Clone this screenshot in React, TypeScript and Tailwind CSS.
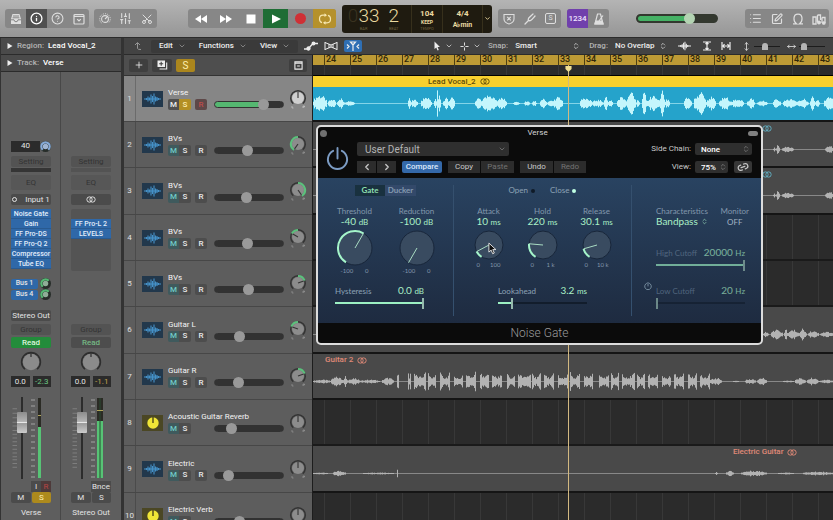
import React, { useState } from 'react';
import {
  ChevronDown,
  ChevronLeft,
  ChevronRight,
  ChevronsUpDown,
  CircleHelp,
  Info,
  Link2,
  List,
  MoveHorizontal,
  MoveVertical,
  Plus,
  Scissors,
  SlidersVertical,
  SquarePen,
} from 'lucide-react';
import clsx from 'clsx';

const polar = (c: number, r: number, deg: number) => {
  const a = ((deg - 90) * Math.PI) / 180;
  return [c + r * Math.cos(a), c + r * Math.sin(a)];
};

const arc = (c: number, r: number, from: number, to: number) => {
  const [x1, y1] = polar(c, r, from);
  const [x2, y2] = polar(c, r, to);
  return `M${x1} ${y1}A${r} ${r} 0 ${to - from > 180 ? 1 : 0} 1 ${x2} ${y2}`;
};

// [start, end, amplitude] in timeline pixels
type Burst = [number, number, number];

const noise = (n: number) => {
  const v = Math.sin(n * 12.9898) * 43758.5453;
  return v - Math.floor(v);
};

// plucked bursts are loud at both ends, sung ones swell in the middle
const envelope = (t: number, plucked: boolean) => {
  const edge = Math.abs(t * 2 - 1);
  return plucked ? 0.5 + 0.5 * edge * edge : 1 - 0.6 * edge * edge;
};

const Wave = ({ bursts, className, height = 31 }: { bursts: Burst[]; className: string; height?: number }) => {
  const mid = Math.floor(height / 2) + 0.5;
  const plucked = (amp: number) => height === 31 && amp > 6;
  let d = '';
  bursts.forEach(([from, to, amp]) => {
    for (let x = from; x <= to; x++) {
      const t = to > from ? (x - from) / (to - from) : 0.5;
      const h = Math.max(0.5, amp * envelope(t, plucked(amp)) * (0.5 + 0.5 * noise(x + from)));
      d += `M${x + 0.5} ${mid - h}V${mid + h}`;
    }
  });
  return (
    <svg viewBox={`0 0 520 ${height}`} preserveAspectRatio="none" style={{ height }} className={clsx('w-full shrink-0', className)}>
      <path d={`M0 ${mid}H520`} stroke="currentColor" strokeWidth="1" opacity="0.6" />
      <path d={d} stroke="currentColor" strokeWidth="1" fill="none" />
    </svg>
  );
};

const LinkRings = ({ className = '' }: { className?: string }) => (
  <svg viewBox="0 0 12 8" className={clsx('h-[7px] w-[10px]', className)} fill="none" stroke="currentColor" strokeWidth="1.1">
    <circle cx="4.2" cy="4" r="3.2" />
    <circle cx="7.8" cy="4" r="3.2" />
  </svg>
);

/* ---------- toolbar ---------- */

const ToolButton = ({ label, className, children }: { label: string; className?: string; children: React.ReactNode }) => (
  <button aria-label={label} className={clsx('flex h-[19px] w-[21px] items-center justify-center', className)}>
    {children}
  </button>
);

const group = 'flex overflow-hidden rounded-[3px] bg-[#878787] text-[#dedede]';

const Toolbar = () => (
  <header className="flex h-[37px] shrink-0 items-center justify-between bg-linear-to-b from-[#b4b4b4] to-[#969696] pr-1 pl-[5px]">
    <div className="flex gap-[5px]">
      <div className={group}>
        <ToolButton label="Library">
          <svg viewBox="0 0 12 12" className="size-[12px]">
            <path d="M2.5 1H9.500L11 6V11H1V6Z" fill="#dedede" />
            <path d="M3 3H9M2.600 4.800H9.400M1 6.800H4Q4.300 8.800 6 8.800T8 6.800H11" stroke="#7c7c7c" strokeWidth="0.900" fill="none" />
          </svg>
        </ToolButton>
        <ToolButton label="Inspector" className="bg-[#505050] text-white"><Info size={13} strokeWidth={2.4} /></ToolButton>
        <ToolButton label="Quick Help"><CircleHelp size={13} /></ToolButton>
        <ToolButton label="Toolbar">
          <svg viewBox="0 0 12 12" className="size-[12px]" fill="none" stroke="currentColor" strokeWidth="1.2">
            <rect x="1" y="1.5" width="10" height="9.5" rx="1" />
            <path d="M1 3.4H11M4.2 6.2L6 8L7.8 6.2" />
          </svg>
        </ToolButton>
      </div>
      <div className={group}>
        <ToolButton label="Smart Controls">
          <svg viewBox="0 0 12 12" className="size-[12px]" fill="none" stroke="currentColor">
            <circle cx="6" cy="6" r="3.4" strokeWidth="1.1" />
            <path d="M6 6L8 4" strokeWidth="1.1" />
            <path d={arc(6, 5.3, -140, 140)} strokeWidth="1" strokeDasharray="1 1.1" />
          </svg>
        </ToolButton>
        <ToolButton label="Mixer"><SlidersVertical size={13} /></ToolButton>
        <ToolButton label="Editors"><Scissors size={12} className="-rotate-90" /></ToolButton>
      </div>
    </div>

    <div className="flex items-center gap-[6px] pl-1">
      <div className="flex overflow-hidden rounded-[3px] bg-[#878787] text-white">
        {[
          { label: 'Rewind', d: 'M7 2V10L1 6ZM13 2V10L7 6Z' },
          { label: 'Forward', d: 'M1 2V10L7 6ZM7 2V10L13 6Z' },
          { label: 'Stop', d: 'M2.500 1.500H11.500V10.500H2.500Z' },
        ].map((b) => (
          <button key={b.label} aria-label={b.label} className="flex h-[19px] w-[25px] items-center justify-center">
            <svg viewBox="0 0 14 12" className="h-[12px] w-[14px]" fill="currentColor"><path d={b.d} /></svg>
          </button>
        ))}
        <button aria-label="Play" className="flex h-[19px] w-[25px] items-center justify-center bg-[#1f6d35]">
          <svg viewBox="0 0 12 12" className="size-[12px]" fill="currentColor"><path d="M2 1.500L11 6L2 10.500Z" /></svg>
        </button>
        <button aria-label="Record" className="flex h-[19px] w-[25px] items-center justify-center">
          <span className="size-[11px] rounded-full bg-[#cf3035]" />
        </button>
        <button aria-label="Cycle" className="flex h-[19px] w-[23px] items-center justify-center bg-[#b5912c] text-[#f6e6ae]">
          <svg viewBox="0 0 14 12" className="h-[12px] w-[14px]" fill="none" stroke="currentColor" strokeWidth="1.2">
            <path d="M8 2.200H5Q1.500 2.200 1.500 6Q1.500 9 4 9.700M6 9.800H9Q12.500 9.800 12.500 6Q12.500 3 10 2.300" />
            <path d="M6.500 0.300L9 2.200L6.500 4.100ZM7.500 7.900L5 9.800L7.500 11.700Z" fill="currentColor" stroke="none" />
          </svg>
        </button>
      </div>

      <div className="flex h-[28px] w-[150px] rounded-[3px] bg-[#1f1b10] text-[#ead9a0]">
        <div className="flex w-[70px] items-start justify-end gap-[9px] border-r border-[#37301c] pr-3 leading-none">
          <div className="flex flex-col items-center">
            <span className="text-[19px] leading-[22px] font-light"><span className="text-[#3a3320]">0</span>33</span>
            <span className="text-[4px] leading-[4px] text-[#6b5f3c]">BAR</span>
          </div>
          <div className="flex flex-col items-center">
            <span className="text-[19px] leading-[22px] font-light">2</span>
            <span className="text-[4px] leading-[4px] text-[#6b5f3c]">BEAT</span>
          </div>
        </div>
        <div className="flex w-[31px] flex-col items-center border-r border-[#37301c] pt-1 font-bold">
          <span className="text-[8px] leading-[9px]">104</span>
          <span className="text-[5px] leading-[8px]">KEEP</span>
          <span className="text-[4px] leading-[6px] font-normal text-[#6b5f3c]">TEMPO</span>
        </div>
        <div className="flex w-[40px] flex-col items-center border-r border-[#37301c] pt-1 font-bold">
          <span className="text-[8px] leading-[9px]">4/4</span>
          <span className="text-[7px] leading-[14px]">A♭min</span>
        </div>
        <button aria-label="Display mode" className="flex flex-1 items-center justify-center"><ChevronDown size={7} strokeWidth={3} /></button>
      </div>

      <div className={group}>
        <ToolButton label="Replace">
          <svg viewBox="0 0 12 12" className="size-[12px]" fill="none" stroke="currentColor" strokeWidth="1.1">
            <path d="M1 1.500H11V6Q11 9.500 6 11Q1 9.500 1 6ZM4.200 3.800L7.800 7.400M7.800 3.800L4.200 7.400" />
          </svg>
        </ToolButton>
        <ToolButton label="Tuner">
          <svg viewBox="0 0 12 12" className="size-[12px]" fill="none" stroke="currentColor" strokeWidth="1.300" strokeLinecap="round">
            <path d="M1 11L4.500 7.500M4.500 7.500C3.500 5.500 5 4.500 9 1M4.500 7.500C6.500 8.500 7.500 7 11 3" />
          </svg>
        </ToolButton>
        <ToolButton label="Solo">
          <span className="flex size-[11px] items-center justify-center rounded-[2px] border border-[#dedede] text-[7px]">S</span>
        </ToolButton>
      </div>

      <div className={group}>
        <button className="h-[19px] w-[21px] bg-[#7040ac] text-[8px] font-medium text-[#f0e6ff]">1234</button>
        <ToolButton label="Metronome">
          <svg viewBox="0 0 12 12" className="size-[12px]" fill="none" stroke="currentColor" strokeWidth="1.200">
            <path d="M4.500 1H7.500L10 11H2ZM6 8L10 2.500" />
            <path d="M2.800 8H9.200L10 11H2Z" fill="currentColor" />
          </svg>
        </ToolButton>
      </div>
    </div>

    <input
      type="range"
      aria-label="Master volume"
      defaultValue={69}
      className="h-[11px] w-[82px] appearance-none bg-transparent [&::-webkit-slider-runnable-track]:h-[9px] [&::-webkit-slider-runnable-track]:rounded-full [&::-webkit-slider-runnable-track]:border-2 [&::-webkit-slider-runnable-track]:border-[#33382f] [&::-webkit-slider-runnable-track]:bg-[linear-gradient(to_right,#45b265_70%,#33382f_70%)] [&::-webkit-slider-thumb]:-mt-[3px] [&::-webkit-slider-thumb]:size-[11px] [&::-webkit-slider-thumb]:appearance-none [&::-webkit-slider-thumb]:rounded-full [&::-webkit-slider-thumb]:bg-[#b3d3b2]"
    />

    <div className={group}>
      <ToolButton label="List Editors"><List size={13} /></ToolButton>
      <ToolButton label="Note Pads"><SquarePen size={12} strokeWidth={2.4} /></ToolButton>
      <ToolButton label="Loop Browser">
        <svg viewBox="0 0 12 12" className="size-[12px]" fill="none" stroke="currentColor" strokeWidth="1.200">
          <path d="M1 10.800H4.500C1 8.500 0.800 1.200 6 1.200S11 8.500 7.500 10.800H11" />
        </svg>
      </ToolButton>
      <ToolButton label="Browsers">
        <svg viewBox="0 0 14 12" className="h-[12px] w-[14px]" fill="none" stroke="currentColor" strokeWidth="1.300">
          <path d="M1 4H4V11H1ZM5.500 2H8.500V7M5.500 2V9M10 4.500H13V10M10 4.500V10" />
          <circle cx="7" cy="9.500" r="1.300" fill="currentColor" />
          <circle cx="11.800" cy="10" r="1.200" fill="currentColor" />
        </svg>
      </ToolButton>
    </div>
  </header>
);

/* ---------- inspector ---------- */

const PanKnob = ({ green }: { green?: boolean }) => (
  <svg viewBox="0 0 12 12" className="size-[11px]">
    <circle cx="6" cy="6" r="6" fill="#272d29" />
    <path d={arc(6, 4.6, -140, green ? 50 : 140)} stroke={green ? '#55b873' : '#87abd8'} strokeWidth="2.4" fill="none" />
    <circle cx="6" cy="6" r="3" fill={green ? '#8fae97' : '#9fb5d3'} />
  </svg>
);

const Fader = ({ name, level, peak, wide }: { name: string; level: number; peak: number; wide?: boolean }) => (
  <div className="mt-[10px] flex h-[82px] w-full items-stretch justify-between pr-2">
    <div className="flex items-stretch">
      <svg viewBox="0 0 8 82" className="h-[82px] w-[6px]" stroke="#8a8a8a" strokeWidth="1">
        {[2, 8, 14, 20, 25, 31, 36, 41, 46, 51, 56, 61, 66, 70, 75, 80].map((y) => <path key={y} d={`M2 ${y}H8`} />)}
      </svg>
      <input
        type="range"
        aria-label={`${name} fader`}
        defaultValue={76}
        className="h-[82px] w-[10px] appearance-none bg-transparent bg-[linear-gradient(to_right,transparent_4px,#2c2c2c_4px,#2c2c2c_6px,transparent_6px)] [direction:rtl] [writing-mode:vertical-lr] [&::-webkit-slider-thumb]:h-[21px] [&::-webkit-slider-thumb]:w-[10px] [&::-webkit-slider-thumb]:appearance-none [&::-webkit-slider-thumb]:rounded-[1px] [&::-webkit-slider-thumb]:bg-[linear-gradient(#8c8c8c,#b3b3b3_45%,#e8e8e8_50%,#9a9a9a_55%,#cdcdcd)]"
      />
    </div>
    <svg viewBox="0 0 14 82" className="h-[82px] w-[14px]">
      <path d="M2 3H6M2 9H6M2 15H6M2 21H6M2 27H6M2 33H6M2 39H6M2 45H6M2 51H6M2 57H6M2 63H6M2 69H6M2 75H6M2 80H6" stroke="#808080" strokeWidth="2" />
      <rect x={wide ? 8 : 9} y="1" width={wide ? 6 : 3} height="80" fill="#2b2b25" />
      <rect x={wide ? 8 : 9} y={level} width={wide ? 6 : 3} height={81 - level} fill="#57c375" />
      {wide && <path d="M11 1V81" stroke="#2b4a33" strokeWidth="1" />}
      <rect x={wide ? 8 : 9} y={peak} width={wide ? 6 : 3} height="1" fill="#b0a45a" />
    </svg>
  </div>
);

interface StripProps {
  name: string;
  inserts: string[];
  value: string;
  output?: boolean;
}

const cell = 'flex h-[11px] w-full shrink-0 items-center justify-center rounded-[2px] text-[8px]';

const ChannelStrip = ({ name, inserts, value, output }: StripProps) => (
  <div className={clsx('flex flex-1 flex-col items-center px-[10px] pt-[68px] text-[#e4e4e4]', output && 'shadow-[-1px_0_0_#484848]')}>
    <div className="flex h-[12px] w-full items-center">
      {!output && (
        <>
          <span className="flex h-[11px] flex-1 items-center justify-center bg-[#2b2b2b] text-[8px]">40</span>
          <PanKnob />
        </>
      )}
    </div>
    <button className={clsx(cell, 'mt-1 bg-[#535353] text-[#343434]')}>Setting</button>
    <div className={clsx('mt-px h-1 w-full shrink-0', output ? 'bg-[#535353]' : 'bg-[#353535]')} />
    <button className="mt-[3px] flex h-[15px] w-full shrink-0 items-center justify-center rounded-[2px] bg-[#575757] text-[8px] text-[#343434]">EQ</button>
    <button aria-label={output ? 'Stereo' : undefined} className={clsx(cell, 'mt-1 gap-2 whitespace-nowrap bg-[#4b4b4b]')}>
      {output ? <LinkRings /> : (
        <>
          <span className="size-[5px] rounded-full border border-[#e4e4e4]" />
          Input 1
        </>
      )}
    </button>
    <div className={clsx('mt-1 flex h-[62px] w-full shrink-0 flex-col rounded-[2px] text-[7px] leading-[10px] font-medium whitespace-nowrap', output && 'bg-[#545454] pt-[10px]')}>
      {inserts.map((fx) => (
        <button key={fx} className="flex h-[10px] shrink-0 items-center justify-center border-b border-[#295a90] bg-[#2f68a8] text-[#e3eefb]">{fx}</button>
      ))}
    </div>
    <div className="mt-[7px] flex h-[22px] w-full shrink-0 flex-col">
      {!output && ['Bus 1', 'Bus 4'].map((bus) => (
        <div key={bus} className="flex h-[11px] items-center gap-[2px]">
          <button className="flex h-[10px] flex-1 items-center justify-center rounded-[2px] bg-[#2f68a8] text-[7px] font-medium">{bus}</button>
          <PanKnob green />
        </div>
      ))}
    </div>
    <button disabled={output} className={clsx(cell, 'mt-[10px] whitespace-nowrap', output ? 'invisible' : 'bg-[#4b4b4b]')}>Stereo Out</button>
    <button className={clsx(cell, 'mt-[3px] bg-[#535353] text-[#343434]')}>Group</button>
    <button className={clsx(cell, 'mt-[2px] font-medium', output ? 'bg-[#4d4d4d] text-[#74b884]' : 'bg-[#238c3b] text-[#dcf5dc]')}>Read</button>
    <svg viewBox="0 0 22 22" className="mt-[3px] size-[22px] shrink-0">
      <path d={arc(11, 9.4, -140, 140)} stroke="#2e2e2e" strokeWidth="1.600" fill="none" />
      <circle cx="11" cy="11" r="8.200" fill="#8b8b8b" />
      <path d="M11 1V6" stroke="#2e2e2e" strokeWidth="1.200" />
    </svg>
    <div className="mt-[3px] flex h-[11px] w-full shrink-0 gap-[3px] text-[8px]">
      <span className="flex flex-1 items-center justify-center bg-[#2b2b2b]">0.0</span>
      <span className={clsx('flex flex-1 items-center justify-center bg-[#2b2b2b]', output ? 'text-[#c3a44e]' : 'text-[#6bc582]')}>{value}</span>
    </div>
    <Fader name={name} level={output ? 24 : 30} peak={output ? 13 : 18} wide={output} />
    <div className="mt-[2px] flex h-[11px] w-full shrink-0 justify-end text-[8px]">
      {output ? (
        <button className="flex w-[20px] items-center justify-center bg-[#4b4b4b]">Bnce</button>
      ) : (
        <>
          <button className="flex w-[10px] items-center justify-center bg-[#4b4b4b]">I</button>
          <button className="flex w-[10px] items-center justify-center bg-[#4e3a3a] text-[#b84545]">R</button>
        </>
      )}
    </div>
    <div className="flex h-[11px] w-full shrink-0 gap-px text-[8px]">
      <button className="flex flex-1 items-center justify-center rounded-[2px] bg-[#4b4b4b]">M</button>
      <button className={clsx('flex flex-1 items-center justify-center rounded-[2px]', output ? 'bg-[#4b4b4b]' : 'bg-[#ad8a1d] text-[#fff0b3]')}>S</button>
    </div>
    <span className="mt-1 text-[8px] leading-[11px] whitespace-nowrap">{name}</span>
  </div>
);

const Inspector = () => (
  <aside className="flex w-[124px] shrink-0 flex-col border-r-3 border-l border-[#333] bg-[#5e5e5e] text-[9px] text-white">
    {[['Region:', 'Lead Vocal_2'], ['Track:', 'Verse']].map(([label, value]) => (
      <button key={label} className="flex h-[17px] shrink-0 items-center gap-1 border-b border-[#2b2b2b] bg-[#4a4a4a] pl-1.5 text-[8px] font-medium">
        <svg viewBox="0 0 6 6" className="size-[6px]"><path d="M0.500 0L5.500 3L0.500 6Z" fill="#eee" /></svg>
        <span className="text-[#b5b5b5]">{label}</span>
        <span>{value}</span>
      </button>
    ))}
    <div className="flex flex-1">
      <ChannelStrip name="Verse" value="-2.3" inserts={['Noise Gate', 'Gain', 'FF Pro-DS', 'FF Pro-Q 2', 'Compressor', 'Tube EQ']} />
      <ChannelStrip name="Stereo Out" value="-1.1" inserts={['FF Pro-L 2', 'LEVELS']} output />
    </div>
  </aside>
);

/* ---------- tracks ---------- */

interface Track {
  name: string;
  volume: number;
  pan: number;
  aux?: boolean;
}

const tracks: Track[] = [
  { name: 'Verse', volume: 75, pan: 0 },
  { name: 'BVs', volume: 47, pan: -145 },
  { name: 'BVs', volume: 46, pan: 145 },
  { name: 'BVs', volume: 48, pan: -60 },
  { name: 'BVs', volume: 49, pan: 70 },
  { name: 'Guitar L', volume: 33, pan: -70 },
  { name: 'Guitar R', volume: 32, pan: 70 },
  { name: 'Acoustic Guitar Reverb', volume: 19, pan: 0, aux: true },
  { name: 'Electric', volume: 14, pan: 0 },
  { name: 'Electric Verb', volume: 33, pan: 0, aux: true },
];

const TrackIcon = ({ aux }: { aux?: boolean }) =>
  aux ? (
    <span className="flex h-[16px] w-[21px] shrink-0 items-center justify-center bg-[#4b4724]">
      <svg viewBox="0 0 12 12" className="size-[12px]"><circle cx="6" cy="6" r="5.700" fill="#f0e637" /><path d="M6 0V6" stroke="#3f3b18" strokeWidth="1.300" /></svg>
    </span>
  ) : (
    <span className="flex h-[16px] w-[21px] shrink-0 items-center justify-center bg-[#22384c]">
      <svg viewBox="0 0 17 12" className="h-[12px] w-[17px]" stroke="#4591c8" strokeWidth="1.100">
        <path d="M1 5.500V6.500M2.500 5V7M4 3.500V8.500M5.500 4.500V7.500M7 1.500V10.500M8.500 3V9M10 0.500V11.500M11.500 3.500V8.500M13 4V8M14.500 5V7M16 5.500V6.500M0 6H17" />
      </svg>
    </span>
  );

const TrackHeader = ({ track, index }: { track: Track; index: number }) => {
  const [volume, setVolume] = useState(track.volume);
  const selected = index === 0;
  const fill = `${Math.round(volume * 0.9 + 6)}%`;
  const on = 'flex h-[11px] items-center justify-center text-[8px] font-medium';

  return (
    <li className={clsx('flex items-center border-b border-[#474747]', selected ? 'bg-[#868686]' : 'bg-[#5d5d5d]')}>
      <span className={clsx('flex w-[12px] items-center justify-center self-stretch border-r text-[8px] text-[#e0e0e0]', selected ? 'border-[#6b6b6b]' : 'border-[#4b4b4b]')}>
        {index + 1}
      </span>
      <span className="pr-[5px] pl-[6px]"><TrackIcon aux={track.aux} /></span>
      <div className="flex flex-1 flex-col gap-px">
        <span className="text-[8px] leading-[11px] whitespace-nowrap text-[#f4f4f4]">{track.name}</span>
        <div className="flex h-[11px] items-center text-[#ececec]">
          <button className={clsx(on, 'w-[11px] rounded-l-[2px]', selected ? 'bg-[#505050]' : 'bg-[#3f5a5d] text-[#6fcac6]')}>M</button>
          <button className={clsx(on, 'w-[12px] rounded-r-[2px]', selected ? 'bg-[#b38f24] text-[#ffedb0]' : 'bg-[#4d4d4d]')}>S</button>
          {!track.aux && (
            <button className={clsx(on, 'ml-1 w-[12px] rounded-[2px]', selected ? 'bg-[#5e4848] text-[#bd4c4c]' : 'bg-[#4d4d4d]')}>R</button>
          )}
          <input
            type="range"
            aria-label={`${track.name} ${index + 1} volume`}
            value={volume}
            onChange={(e) => setVolume(Number(e.target.value))}
            style={{ '--fill': selected ? fill : '0%' } as React.CSSProperties}
            className="ml-auto h-[11px] w-[70px] appearance-none bg-transparent [&::-webkit-slider-runnable-track]:h-[7px] [&::-webkit-slider-runnable-track]:rounded-full [&::-webkit-slider-runnable-track]:border [&::-webkit-slider-runnable-track]:border-[#323232] [&::-webkit-slider-runnable-track]:bg-[linear-gradient(to_right,#55b771_var(--fill),#323232_var(--fill))] [&::-webkit-slider-thumb]:-mt-[3px] [&::-webkit-slider-thumb]:size-[11px] [&::-webkit-slider-thumb]:appearance-none [&::-webkit-slider-thumb]:rounded-full [&::-webkit-slider-thumb]:bg-[#999]"
          />
        </div>
      </div>
      <svg viewBox="0 0 18 20" className="mr-[5px] ml-[5px] h-[20px] w-[18px] shrink-0">
        <path d={arc(9, 7.3, -140, 140)} stroke="#343434" strokeWidth="1.500" fill="none" />
        {track.pan !== 0 && (
          <path d={track.pan < 0 ? arc(9, 6.9, track.pan, 0) : arc(9, 6.9, 0, track.pan)} stroke="#5cc07c" strokeWidth="2.400" fill="none" />
        )}
        <circle cx="9" cy="9" r="6" fill={selected ? '#cfcfcf' : '#8c8c8c'} />
        <path d={`M9 9L${polar(9, 6, track.pan).join(' ')}`} stroke="#333" strokeWidth="1.100" />
        <path d="M3 17V19H4.500M14 19V17H15.500V18H14" stroke={selected ? '#ccc' : '#999'} strokeWidth="0.700" fill="none" />
      </svg>
    </li>
  );
};

const vocal: Burst[] = [
  [0, 13, 9], [15, 22, 5], [24, 30, 6], [31, 41, 3], [95, 97, 9], [98, 104, 5], [108, 118, 7], [121, 123, 8], [124, 124, 17], [125, 127, 12],
  [130, 135, 6], [136, 141, 8], [162, 168, 6], [169, 183, 9], [184, 193, 6], [200, 206, 2], [211, 216, 3], [219, 223, 3], [227, 233, 6],
  [234, 241, 3], [240, 249, 7], [267, 278, 7], [279, 290, 4], [291, 294, 11], [295, 299, 4], [304, 313, 7], [314, 322, 11], [323, 326, 4],
  [329, 333, 12], [334, 346, 8], [347, 351, 13], [352, 356, 5], [371, 378, 7], [381, 392, 12], [393, 402, 7], [406, 417, 7], [418, 430, 5],
  [434, 441, 6], [444, 454, 3], [460, 467, 5], [470, 483, 5], [484, 495, 5], [497, 501, 9], [502, 506, 5], [511, 520, 8],
];
const backing: Burst[] = [[460, 462, 2], [463, 466, 5], [469, 480, 3], [512, 520, 4]];
const guitarL: Burst[] = [[450, 455, 3], [458, 469, 5], [471, 474, 6], [475, 485, 5], [486, 493, 6], [495, 505, 4], [507, 520, 3]];
const guitarR: Burst[] = [
  [0, 17, 2], [18, 29, 5], [30, 34, 6], [35, 46, 4], [47, 66, 2], [69, 80, 4], [84, 85, 8], [95, 97, 10], [101, 112, 10], [115, 122, 9],
  [127, 136, 9], [141, 149, 7], [153, 162, 10], [167, 175, 10], [179, 188, 10], [194, 201, 9], [205, 217, 10], [219, 227, 9],
  [231, 240, 9], [245, 254, 7], [257, 266, 10], [271, 279, 10], [286, 295, 9], [298, 305, 9], [309, 321, 10], [324, 331, 9],
  [335, 344, 9], [349, 357, 7], [361, 370, 10], [375, 383, 10], [387, 396, 10], [397, 408, 4], [420, 425, 1], [432, 442, 3],
  [444, 453, 4], [470, 480, 1], [482, 492, 4], [494, 505, 4], [506, 520, 2],
];
const electric: Burst[] = [[0, 14, 1], [20, 32, 3], [50, 80, 1], [84, 84, 5], [402, 404, 2], [413, 420, 3], [428, 453, 3], [465, 480, 1], [490, 520, 2]];

const gridLines = 'bg-[repeating-linear-gradient(to_right,#2b2b2b_0,#2b2b2b_11px,#383838_11px,#383838_12px,#2b2b2b_12px,#2b2b2b_26px)]';

const Region = ({ bursts, label, className }: { bursts: Burst[]; label?: string; className?: string }) => (
  <li className="flex flex-col overflow-hidden border-b-2 border-[#151515] bg-[#494949]">
    <span className={clsx('flex h-[12px] shrink-0 items-center gap-1 text-[8px] font-medium', className)}>
      {label}
      {className && <LinkRings />}
    </span>
    <Wave bursts={bursts} className="text-[#b2b2b2]" />
  </li>
);

const EmptyLane = () => <li className={clsx('border-b-2 border-[#1a1a1a]', gridLines)} />;

const rows = 'grid auto-rows-[46px_46px_47px]';

/* ---------- plug-in window ---------- */

interface DialProps {
  label: string;
  value: string;
  unit: string;
  angle: number;
  min: string;
  max: string;
  large?: boolean;
  filled?: boolean;
}

const Dial = ({ label, value, unit, angle, min, max, large, filled = true }: DialProps) => {
  const size = large ? 38 : 32;
  const c = size / 2;
  const r = c - 2;
  return (
    <div className={clsx('flex flex-col items-center', large ? 'w-[62px]' : 'w-[54px]')}>
      <span className="text-[8px] leading-[10px] text-[#8297ac]">{label}</span>
      <span className="text-[10px] leading-[11px] whitespace-nowrap text-[#a9efc6]">{value} <span className="text-[8px]">{unit}</span></span>
      <svg role="img" aria-label={`${label} dial`} viewBox={`0 0 ${size} ${size}`} className="mt-px" width={size} height={size}>
        <circle cx={c} cy={c} r={r} fill="#394b60" stroke="#18263a" strokeWidth="1" />
        {filled && <path d={arc(c, r, -148, angle)} stroke="#a5f5ca" strokeWidth="2" fill="none" />}
        <path d={`M${c} ${c}L${polar(c, r, angle).join(' ')}`} stroke="#a9dcc3" strokeWidth="1" />
      </svg>
      <span className={clsx('flex justify-between text-[6px] leading-[8px] text-[#8297ac]', large ? 'w-[28px]' : 'w-[24px]')}>
        <span>{min}</span>
        <span>{max}</span>
      </span>
    </div>
  );
};

interface ParamProps {
  id: string;
  label: string;
  value: string;
  unit: string;
  percent: number;
  dim?: boolean;
}

const Param = ({ id, label, value, unit, percent, dim }: ParamProps) => (
  <div className={clsx('flex w-[89px] flex-col', dim && 'opacity-65')}>
    <div className="flex items-center justify-between leading-[11px] whitespace-nowrap">
      <label htmlFor={id} className={clsx('text-[8px]', dim ? 'text-[#6a809a]' : 'text-[#8da2b5]')}>{label}</label>
      <span className="text-[10px] text-[#a9efc6]">{value} <span className="text-[8px]">{unit}</span></span>
    </div>
    <input
      id={id}
      type="range"
      defaultValue={percent}
      style={{ '--fill': `${percent}%` } as React.CSSProperties}
      className="h-[11px] w-full appearance-none bg-transparent [&::-webkit-slider-runnable-track]:h-[2px] [&::-webkit-slider-runnable-track]:bg-[linear-gradient(to_right,#9cf0c3_var(--fill),#121d2c_var(--fill))] [&::-webkit-slider-thumb]:-mt-1 [&::-webkit-slider-thumb]:h-[11px] [&::-webkit-slider-thumb]:w-[2px] [&::-webkit-slider-thumb]:appearance-none [&::-webkit-slider-thumb]:bg-[#95b9ad]"
    />
  </div>
);

const Power = ({ className }: { className: string }) => (
  <svg viewBox="0 0 24 24" className={className} fill="none" stroke="currentColor" strokeWidth="2" strokeLinecap="round">
    <path d="M12 1V12M7.500 4A10 10 0 1 0 16.500 4" />
  </svg>
);

const barButton = 'flex h-[12px] items-center justify-center bg-[#2c2c2c] text-[8px]';

const NoiseGate = () => (
  <section className="absolute top-[49px] left-[3px] z-20 flex w-[447px] flex-col rounded-[5px] border-2 border-[#dcdcdc] bg-[#0b0b0b]">
    <div className="flex h-[12px] items-center justify-between pr-[3px] pl-[2px]">
      <button aria-label="Close" className="size-[7px] rounded-full bg-[#707070]" />
      <h2 className="text-[8px] leading-[12px] text-[#d6d6d6]">Verse</h2>
      <button aria-label="Collapse" className="h-[5px] w-[10px] rounded-full bg-[#808080]" />
    </div>

    <div className="flex h-[39px] items-start justify-between pr-[9px] pl-2">
      <div className="flex gap-2">
        <button aria-label="Bypass" className="mt-1 text-[#7c9cc4]"><Power className="size-[23px]" /></button>
        <div className="flex flex-col gap-[5px] pt-[3px]">
          <div className="relative flex h-[14px] w-[152px]">
            <select aria-label="Preset" className="h-full w-full appearance-none rounded-[2px] bg-[#2f2f2f] pl-2 text-[10px] leading-[13px] text-[#b4b4b4]">
              <option>User Default</option>
            </select>
            <ChevronDown size={8} className="pointer-events-none absolute top-[3px] right-[3px] text-[#8a8a8a]" />
          </div>
          <div className="flex gap-[6px] text-[#c9c9c9]">
            <div className="flex gap-px">
              <button aria-label="Previous preset" className={clsx(barButton, 'w-[19px]')}><ChevronLeft size={10} strokeWidth={3} /></button>
              <button aria-label="Next preset" className={clsx(barButton, 'w-[19px]')}><ChevronRight size={10} strokeWidth={3} /></button>
            </div>
            <button className="flex h-[12px] w-[40px] items-center justify-center rounded-[2px] bg-[#3468a8] text-[8px] font-medium text-[#dbe9fa]">Compare</button>
            <div className="flex gap-px">
              <button className={clsx(barButton, 'w-[32px]')}>Copy</button>
              <button className={clsx(barButton, 'w-[33px] text-[#737373]')}>Paste</button>
            </div>
            <div className="flex gap-px">
              <button className={clsx(barButton, 'w-[33px]')}>Undo</button>
              <button className={clsx(barButton, 'w-[32px] text-[#737373]')}>Redo</button>
            </div>
          </div>
        </div>
      </div>

      <div className="grid grid-cols-[auto_57px] items-center gap-x-1 gap-y-[6px] pt-1 text-[8px] text-[#c9c9c9]">
        <label htmlFor="side-chain" className="text-right leading-[12px]">Side Chain:</label>
        <div className="relative flex h-[12px]">
          <select id="side-chain" className="w-full appearance-none rounded-[2px] bg-[#2f2f2f] pl-1.5 leading-[11px] font-medium text-white">
            <option>None</option>
          </select>
          <ChevronsUpDown size={8} className="pointer-events-none absolute top-[2px] right-[2px] text-[#8a8a8a]" />
        </div>
        <label htmlFor="view" className="text-right leading-[12px]">View:</label>
        <div className="flex h-[12px] gap-[6px]">
          <div className="relative flex w-[33px]">
            <select id="view" className="w-full appearance-none rounded-[2px] bg-[#2f2f2f] pl-1.5 leading-[11px] font-medium text-white">
              <option>75%</option>
            </select>
            <ChevronsUpDown size={8} className="pointer-events-none absolute top-[2px] right-px text-[#8a8a8a]" />
          </div>
          <button aria-label="Link" className="flex flex-1 items-center justify-center rounded-[2px] bg-[#363636]"><Link2 size={12} strokeWidth={2.4} className="-rotate-20" /></button>
        </div>
      </div>
    </div>

    <div className="flex h-[145px] bg-linear-to-b from-[#294361] to-[#1e2b40] py-[7px] font-['Lato',sans-serif]">
      <div className="flex w-[136px] flex-col items-center border-r border-[#35506e] pb-2">
        <div className="flex text-[8px] leading-[11px] font-bold">
          <button className="w-[30px] bg-[#19313f] text-[#8ddfb0]">Gate</button>
          <button className="w-[31px] bg-[#33496a] text-[#8499b0]">Ducker</button>
        </div>
        <div className="mt-[10px] flex">
          <Dial large label="Threshold" value="-40" unit="dB" angle={30} min="-100" max="0" />
          <Dial large label="Reduction" value="-100" unit="dB" angle={-150} min="-100" max="0" filled={false} />
        </div>
        <div className="mt-auto mr-3"><Param id="hysteresis" label="Hysteresis" value="0.0" unit="dB" percent={100} /></div>
      </div>

      <div className="flex w-[178px] flex-col items-center border-r border-[#35506e] pb-2">
        <div className="flex gap-[15px] text-[8px] leading-[11px] text-[#8da2b5]">
          <span className="flex items-center gap-[3px]">Open <i className="size-1 rounded-full bg-[#0f1a28]" /></span>
          <span className="flex items-center gap-[3px]">Close <i className="size-1 rounded-full bg-[#c0ffe3]" /></span>
        </div>
        <div className="relative mt-[10px] flex">
          <Dial label="Attack" value="10" unit="ms" angle={-118} min="0" max="100" />
          <Dial label="Hold" value="220" unit="ms" angle={-85} min="0" max="1 k" />
          <Dial label="Release" value="30.1" unit="ms" angle={-106} min="0" max="10 k" />
          <svg viewBox="0 0 10 14" className="absolute top-[36px] left-[26px] h-[13px] w-[9px]">
            <path d="M1 1V11L3.500 8.800L5.200 12.800L7 12L5.300 8.200H8.800Z" fill="#111" stroke="#eee" strokeWidth="1" />
          </svg>
        </div>
        <div className="mt-auto"><Param id="lookahead" label="Lookahead" value="3.2" unit="ms" percent={15} /></div>
      </div>

      <div className="flex flex-1 flex-col pr-3 pb-2 pl-3">
        <div className="mt-[21px] flex justify-between pl-3">
          <div className="flex flex-col">
            <label htmlFor="characteristics" className="text-[8px] leading-[10px] text-[#8297ac]">Characteristics</label>
            <div className="flex items-center gap-[3px] text-[#a9efc6]">
              <select id="characteristics" className="appearance-none bg-transparent text-[10px] leading-[11px]">
                <option>Bandpass</option>
              </select>
              <ChevronsUpDown size={7} />
            </div>
          </div>
          <div className="flex flex-col items-center text-[8px] text-[#8297ac]">
            <span className="leading-[10px]">Monitor</span>
            <button className="leading-[13px] text-[#a3b4c4]">OFF</button>
          </div>
        </div>
        <div className="mt-auto flex items-end">
          <button aria-label="Filter" className="mr-1 mb-[18px] text-[#9db6c6]"><Power className="size-[8px]" /></button>
          <div className="flex flex-col gap-[15px]">
            <Param dim id="high-cutoff" label="High Cutoff" value="20000" unit="Hz" percent={100} />
            <Param dim id="low-cutoff" label="Low Cutoff" value="20" unit="Hz" percent={0} />
          </div>
        </div>
      </div>
    </div>

    <footer className="flex h-[20px] items-center justify-center text-[12px] font-light text-[#9b9b9b]">Noise Gate</footer>
  </section>
);

/* ---------- arrange area ---------- */

const MenuItem = ({ children }: { children: string }) => (
  <button className="flex items-center gap-[5px]">{children}<ChevronDown size={8} className="text-[#a5a5a5]" /></button>
);

const ZoomSlider = ({ label, value }: { label: string; value: number }) => (
  <input
    type="range"
    aria-label={label}
    defaultValue={value}
    className="h-[11px] w-[26px] appearance-none bg-transparent [&::-webkit-slider-runnable-track]:h-px [&::-webkit-slider-runnable-track]:bg-[#1c1c1c] [&::-webkit-slider-thumb]:-mt-[3px] [&::-webkit-slider-thumb]:h-[7px] [&::-webkit-slider-thumb]:w-[6px] [&::-webkit-slider-thumb]:appearance-none [&::-webkit-slider-thumb]:rounded-t-full [&::-webkit-slider-thumb]:bg-[#b5b5b5]"
  />
);

const MenuBar = () => (
  <nav className="flex h-[17px] shrink-0 items-center justify-between border-b border-[#2b2b2b] bg-[#434343] pr-2 pl-[9px] text-[8px] font-medium text-[#ededed]">
    <div className="flex items-center">
      <button aria-label="Up" className="text-[#969696]">
        <svg viewBox="0 0 10 10" className="size-[10px]" fill="none" stroke="currentColor" strokeWidth="1"><path d="M2 4L4.500 1.500L7 4M4.500 2V7.500Q4.500 8.500 8 8.500" /></svg>
      </button>
      <div className="ml-2 flex h-[13px] items-center gap-[13px] rounded-[2px] bg-[#3a3a3a] px-2">
        <MenuItem>Edit</MenuItem>
        <MenuItem>Functions</MenuItem>
        <MenuItem>View</MenuItem>
      </div>
      <div className="ml-[6px] flex items-center gap-[6px]">
        <button aria-label="Automation">
          <svg viewBox="0 0 14 10" className="h-[10px] w-[14px]" fill="none" stroke="currentColor" strokeWidth="1.300"><path d="M0 8H4L9 2.500H14" /><circle cx="4.500" cy="7.500" r="1.500" fill="currentColor" /><circle cx="9.500" cy="2.500" r="1.300" fill="currentColor" /></svg>
        </button>
        <button aria-label="Flex">
          <svg viewBox="0 0 14 10" className="h-[10px] w-[14px]" fill="none" stroke="currentColor" strokeWidth="1"><path d="M1 1V9M13 1V9M1 1.500L7 4L13 1.500M1 8.500L7 6L13 8.500M5 3V7M9 3V7M7 4V6" /></svg>
        </button>
        <button aria-label="Catch playhead" className="flex h-[12px] w-[18px] items-center justify-center rounded-[2px] bg-[#2f6fb4]">
          <svg viewBox="0 0 14 10" className="h-[10px] w-[14px]" fill="none" stroke="currentColor" strokeWidth="1.200"><path d="M7 3V10M4.500 1H9.500L7 4ZM1 3.500L3 5.500L1 7.500M13 3.500L11 5.500L13 7.500" /></svg>
        </button>
      </div>
    </div>

    <div className="flex items-center gap-[7px]">
      <button aria-label="Left-click tool" className="flex items-center gap-1">
        <svg viewBox="0 0 8 10" className="h-[10px] w-[8px]" fill="currentColor"><path d="M1.500 0.500V8L3.300 6.500L4.500 9.500L5.800 9L4.600 6.100H7Z" /></svg>
        <ChevronDown size={8} />
      </button>
      <button aria-label="Command-click tool" className="flex items-center gap-1">
        <svg viewBox="0 0 10 10" className="size-[9px]" fill="none" stroke="currentColor" strokeWidth="1"><path d="M5 0.500V4M5 6V9.500M0.500 5H4M6 5H9.500" /></svg>
        <ChevronDown size={8} />
      </button>
      <label htmlFor="snap" className="text-[#b3b3b3]">Snap:</label>
      <div className="flex items-center">
        <select id="snap" className="w-[57px] appearance-none bg-transparent"><option>Smart</option></select>
        <ChevronsUpDown size={8} />
      </div>
      <label htmlFor="drag" className="pl-0.5 text-[#b3b3b3]">Drag:</label>
      <div className="flex items-center">
        <select id="drag" className="appearance-none bg-transparent pr-1"><option>No Overlap</option></select>
        <ChevronsUpDown size={8} />
      </div>
      <button aria-label="Waveform zoom" className="px-1">
        <svg viewBox="0 0 14 10" className="h-[10px] w-[13px]" stroke="currentColor" strokeWidth="1.100"><path d="M0 5H14M3 4V6M4.500 3V7M6 1.500V8.500M7.500 0.500V9.500M9 2.500V7.500M10.500 4V6" /></svg>
      </button>
      <button aria-label="Vertical auto zoom">
        <svg viewBox="0 0 10 10" className="size-[10px]" fill="none" stroke="currentColor" strokeWidth="1.200"><path d="M1 1H9M1 9H9M5 1V9M3.500 3L5 1.500L6.500 3M3.500 7L5 8.500L6.500 7" /></svg>
      </button>
      <button aria-label="Horizontal auto zoom" className="pl-0.5">
        <svg viewBox="0 0 10 10" className="size-[10px]" fill="none" stroke="currentColor" strokeWidth="1.200"><path d="M1 1V9M9 1V9M1 5H9M3.500 3L2 5L3.500 7M6.500 3L8 5L6.500 7" /></svg>
      </button>
      <div className="flex items-center gap-[3px] pl-1"><MoveVertical size={9} /><ZoomSlider label="Vertical zoom" value={38} /></div>
      <div className="flex items-center gap-[3px]"><MoveHorizontal size={9} /><ZoomSlider label="Horizontal zoom" value={10} /></div>
    </div>
  </nav>
);

const bars = Array.from({ length: 20 }, (_, i) => 24 + i);

const App = () => (
  <div className="flex h-screen flex-col overflow-hidden bg-[#2b2b2b] font-['Roboto',sans-serif]">
    <Toolbar />
    <div className="flex min-h-0 flex-1 overflow-hidden border-t border-[#2b2b2b]">
      <Inspector />
      <main className="flex min-w-0 flex-1 flex-col">
        <MenuBar />
        <div className="flex min-h-0 flex-1">
          <div className="flex w-[188px] shrink-0 flex-col">
            <div className="flex h-[21px] shrink-0 items-center gap-1 border-b border-[#333] bg-[#4e4e4e] px-[5px] text-[#ececec]">
              <button aria-label="Add track" className="flex h-[13px] w-[19px] items-center justify-center rounded-[2px] bg-[#3f3f3f]"><Plus size={10} /></button>
              <button aria-label="Duplicate track" className="flex h-[13px] w-[20px] items-center justify-center rounded-[2px] bg-[#3f3f3f]">
                <svg viewBox="0 0 11 10" className="h-[10px] w-[11px]">
                  <path d="M0.500 0.500H8V7H0.500Z" fill="currentColor" />
                  <path d="M4.200 1.800V5.700M2.200 3.800H6.200" stroke="#3f3f3f" strokeWidth="1.100" />
                  <path d="M9.700 2.500V9H2.500" fill="none" stroke="currentColor" strokeWidth="1.100" />
                </svg>
              </button>
              <button className="flex h-[13px] w-[19px] items-center justify-center rounded-[2px] bg-[#ab861d] text-[10px] text-[#ffefb0]">S</button>
              <button aria-label="Header options" className="ml-auto flex h-[13px] w-[18px] items-center justify-center rounded-[2px] bg-[#3f3f3f]">
                <svg viewBox="0 0 10 10" className="size-[9px]" fill="none" stroke="currentColor" strokeWidth="1.200"><path d="M1 1H9V9H1ZM1 2.500H9M3.500 5.500H6.500" /></svg>
              </button>
            </div>
            <ol className={rows}>
              {tracks.map((t, i) => <TrackHeader key={i} track={t} index={i} />)}
            </ol>
          </div>

          <div className="flex min-w-0 flex-1 flex-col overflow-hidden border-l border-[#1d1d1d]">
            <div className="flex h-[10px] shrink-0 bg-[#bd9a35] pl-[11px] text-[9px] leading-[9px] font-medium text-[#2f2608]">
              {bars.map((n) => <span key={n} className="w-[26px] shrink-0 border-l border-[#4d3f12] pl-px">{n}</span>)}
            </div>
            <div className={clsx('h-[11px] shrink-0 border-b border-black', gridLines)} />
            <div className="relative">
              <ol className={rows}>
                <li className="flex flex-col border-b-2 border-[#151515] bg-[#25a3cb]">
                  <span className="flex h-[11px] shrink-0 items-center gap-1 bg-[#f8d02f] pl-[115px] text-[8px] font-medium text-[#5c4a08]">Lead Vocal_2 <LinkRings /></span>
                  <Wave bursts={vocal} className="text-[#c4f6fc]" height={33} />
                </li>
                <Region bursts={backing} className="pl-[449px] text-[#62b0c4]" />
                <Region bursts={backing} className="pl-[449px] text-[#62b0c4]" />
                <EmptyLane />
                <EmptyLane />
                <Region bursts={guitarL} />
                <Region bursts={guitarR} label="Guitar 2" className="pl-[12px] text-[#e08a78]" />
                <EmptyLane />
                <Region bursts={electric} label="Electric Guitar" className="pl-[420px] text-[#e08a78]" />
                <EmptyLane />
              </ol>
              <div className="absolute -top-[11px] bottom-0 left-[255px] z-10 w-px bg-[#d3b981]">
                <svg viewBox="0 0 8 8" className="absolute top-0 -left-[3px] h-[8px] w-[7px]"><path d="M0.500 0.500H7.500V4L4 7.500L0.500 4Z" fill="#f0df92" /></svg>
              </div>
              <NoiseGate />
            </div>
          </div>
        </div>
      </main>
    </div>
  </div>
);

export default App;
